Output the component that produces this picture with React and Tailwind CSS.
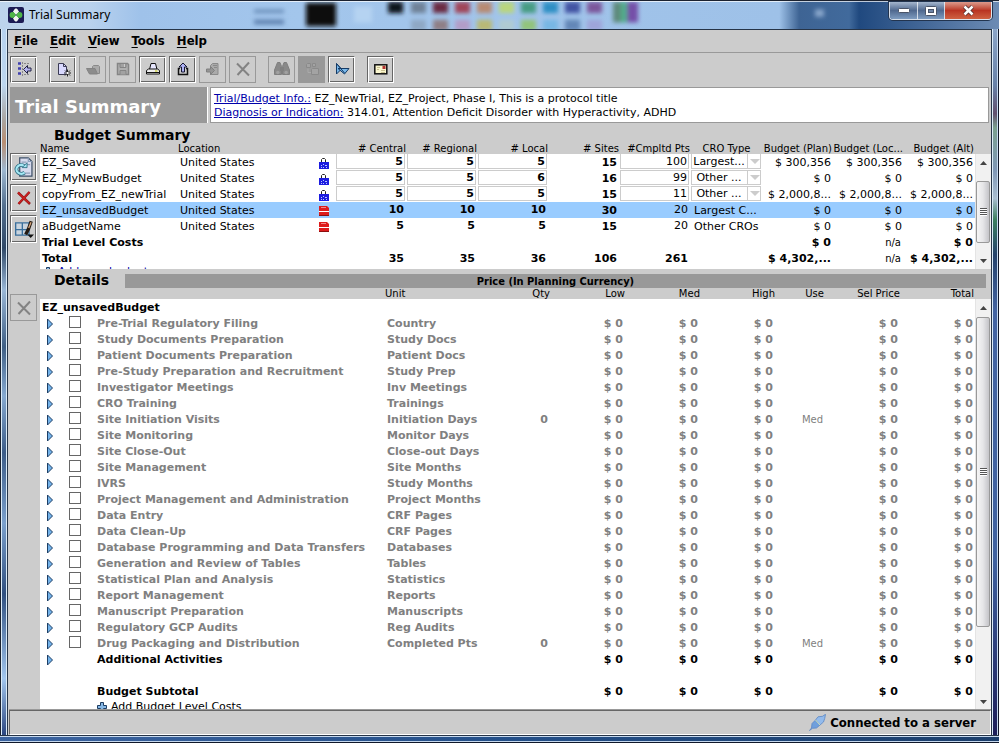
import React from "react";

const budgets = [
  { name: "EZ_Saved", lock: true, central: 5, regional: 5, local: 5, sites: 15, pts: 100, cro: "Largest...", costs: ["$ 300,356", "$ 300,356", "$ 300,356"] },
  { name: "EZ_MyNewBudget", lock: true, central: 5, regional: 5, local: 6, sites: 16, pts: 99, cro: "Other ...", costs: ["$ 0", "$ 0", "$ 0"] },
  { name: "copyFrom_EZ_newTrial", lock: true, central: 5, regional: 5, local: 5, sites: 15, pts: 11, cro: "Other ...", costs: ["$ 2,000,8...", "$ 2,000,8...", "$ 2,000,8..."] },
  { name: "EZ_unsavedBudget", selected: true, central: 10, regional: 10, local: 10, sites: 30, pts: 20, cro: "Largest C...", costs: ["$ 0", "$ 0", "$ 0"] },
  { name: "aBudgetName", central: 5, regional: 5, local: 5, sites: 15, pts: 20, cro: "Other CROs", costs: ["$ 0", "$ 0", "$ 0"] },
];

const activities = [
  ["Pre-Trial Regulatory Filing", "Country"],
  ["Study Documents Preparation", "Study Docs"],
  ["Patient Documents Preparation", "Patient Docs"],
  ["Pre-Study Preparation and Recruitment", "Study Prep"],
  ["Investigator Meetings", "Inv Meetings"],
  ["CRO Training", "Trainings"],
  ["Site Initiation Visits", "Initiation Days", "0", "Med"],
  ["Site Monitoring", "Monitor Days"],
  ["Site Close-Out", "Close-out Days"],
  ["Site Management", "Site Months"],
  ["IVRS", "Study Months"],
  ["Project Management and Administration", "Project Months"],
  ["Data Entry", "CRF Pages"],
  ["Data Clean-Up", "CRF Pages"],
  ["Database Programming and Data Transfers", "Databases"],
  ["Generation and Review of Tables", "Tables"],
  ["Statistical Plan and Analysis", "Statistics"],
  ["Report Management", "Reports"],
  ["Manuscript Preparation", "Manuscripts"],
  ["Regulatory GCP Audits", "Reg Audits"],
  ["Drug Packaging and Distribution", "Completed Pts", "0", "Med"],
];

const swatches = [
  [54, 0, "#10151f"], [77, 0, "#6f8298"], [99, 0, "#6a2a42"], [121, 0, "#a04459"], [143, 0, "#b78a72"], [165, 0, "#b9d67d"],
  [187, 0, "#479c83"], [209, 0, "#2f8fc4"], [231, 0, "#4253a3"], [253, 0, "#7c579b"],
  [77, 19, "#8fa8c4"], [99, 19, "#8f7f86"], [121, 19, "#b29dc8"], [143, 19, "#b9b976"], [165, 19, "#b0cbd2"], [187, 19, "#92c47c"],
  [209, 19, "#78b7e4"], [231, 19, "#6487b8"], [253, 19, "#9fa5da"],
];

/* Blurred glass behind the window caption */
function GlassBackdrop() {
  return (
    <svg className="absolute inset-0 h-full w-full" viewBox="0 0 999 30" preserveAspectRatio="none" aria-hidden="true">
      <defs>
        <linearGradient id="glass" x1="0" x2="1" y1="0" y2="0">
          <stop offset="0" stopColor="#bdd4ec" />
          <stop offset="0.09" stopColor="#b9d2ee" />
          <stop offset="0.14" stopColor="#9fc2ea" />
          <stop offset="0.3" stopColor="#a3c6ec" />
          <stop offset="0.78" stopColor="#9ec1e8" />
          <stop offset="0.8" stopColor="#3e6494" />
          <stop offset="0.85" stopColor="#416a9c" />
          <stop offset="0.86" stopColor="#20497f" />
          <stop offset="1" stopColor="#6c8bb4" />
        </linearGradient>
        <filter id="soft" x="-30%" y="-60%" width="160%" height="220%"><feGaussianBlur stdDeviation="2" /></filter>
      </defs>
      <rect width="999" height="30" fill="url(#glass)" />
      <g filter="url(#soft)">
        <rect x="254" y="9" width="30" height="4" fill="#6b8fba" />
        <rect x="254" y="20" width="30" height="5" fill="#5d80ad" />
        <rect x="306" y="2" width="30" height="25" fill="#07090f" />
        <rect x="354" y="6" width="18" height="17" fill="#b5d3f1" />
        {swatches.map(([x, y, c]) => (
          <rect key={x + "-" + y} x={x + 334} y={y + 1} width="15" height="12" fill={c} />
        ))}
        <rect x="613" y="1" width="9" height="22" fill="#5f8a7c" />
        <rect x="621" y="1" width="7" height="22" fill="#4fae8c" />
        <rect x="627" y="1" width="11" height="22" fill="#7550a8" />
        <rect x="815" y="9" width="9" height="8" fill="#88a6cb" />
      </g>
    </svg>
  );
}

function AppLogo() {
  return (
    <svg width="16" height="16" viewBox="0 0 16 16" aria-hidden="true">
      <rect width="16" height="16" rx="2" fill="#1c1c55" />
      <path d="M8 1 11 4.500 8 8 5 4.500ZM8 8l3 3.500-3 3.500-3-3.500Z" fill="#f1f5f0" />
      <circle cx="4.500" cy="8" r="2.900" fill="#4fb548" />
      <circle cx="11.500" cy="8" r="2.900" fill="#4fb548" />
      <circle cx="8" cy="4.300" r="2.300" fill="#f1f5f0" />
      <circle cx="8" cy="11.700" r="2.300" fill="#f1f5f0" />
    </svg>
  );
}

function Svg({ children, size = 18 }) {
  return (
    <svg width={size} height={size} viewBox="0 0 18 18" fill="none" aria-hidden="true" className="shrink-0">
      {children}
    </svg>
  );
}

const icons = {
  tree: (
    <Svg>
      <path d="M3 3.500h3M3 8.500h3M3 13.500h3" stroke="#3f3fae" strokeWidth="2.500" />
      <path d="M7.500 2v14M9 3.500h5M9 14.500h5" stroke="#888" strokeDasharray="2 1" />
      <path d="M8.500 9.500l4-4v2.500h3.500v3h-3.500v2.500Z" fill="#b4b4ef" stroke="#222244" />
    </Svg>
  ),
  newDoc: (
    <Svg>
      <path d="M4.500 3.500h5l3 3v8h-8Z" fill="#d9d9ff" stroke="#3b3b55" />
      <path d="M9.500 3.500v3h3" stroke="#3b3b55" />
      <path d="M13.500 9.500v7M10 13h7M11 10.500l5 5M16 10.500l-5 5" stroke="#222" />
      <rect x="12.500" y="12" width="2" height="2" fill="#fff" />
    </Svg>
  ),
  open: (
    <Svg>
      <path d="M8.500 8V6.500l1-1h5l1 1v7h-2" fill="#aaa" stroke="#8a8a8a" />
      <path d="M2.500 8.500h8.500l2.500 5.500H5.500Z" fill="#8c8c8c" stroke="#838383" />
    </Svg>
  ),
  save: (
    <Svg>
      <path d="M3.500 3.500h10l1 1v10h-11Z" fill="#b0b0b0" stroke="#858585" strokeWidth="1.500" />
      <path d="M6 3.500h6v4H6ZM6 14.500v-4h6v4" fill="#a2a2a2" stroke="#858585" />
      <path d="M10.500 4v3" stroke="#ccc" />
    </Svg>
  ),
  print: (
    <Svg>
      <path d="M5.500 9.500 7 3.500h4.500l1.500 6" fill="#e8e8ff" stroke="#111" />
      <path d="M2.500 10.500l2-1.500h9l2 1.500v3.500h-13Z" fill="#eee" stroke="#111" />
      <path d="M3 12.500h12" stroke="#111" />
      <path d="M11 11h2.500" stroke="#c4c800" />
    </Svg>
  ),
  upload: (
    <Svg>
      <path d="M6 8.500H4.500v6h9v-6H12" stroke="#111" strokeWidth="1.500" />
      <path d="M7.500 12V7H5l4-4 4 4h-2.500v5Z" fill="#aeb2f5" stroke="#151530" />
    </Svg>
  ),
  importDoc: (
    <Svg>
      <path d="M6.500 7V5.500l2-2h5.500v11H6.500V13" fill="#aaa" stroke="#8a8a8a" />
      <path d="M9 5.500h4M10 7.500h3" stroke="#8a8a8a" />
      <path d="M2.500 9h4V6.500l4 4-4 4V12h-4Z" fill="#959595" stroke="#808080" />
    </Svg>
  ),
  cross: (
    <Svg>
      <path d="M3 3.500 15 15.500M15 2.500 3.500 15" stroke="#838383" strokeWidth="2" />
    </Svg>
  ),
  find: (
    <Svg>
      <path d="M4.500 2.500h2.500l1.500 4v8H1.500V10ZM13.500 2.500H11l-1.500 4v8h7V10Z" fill="#898989" stroke="#7f7f7f" />
      <path d="M7 7h4v4H7Z" fill="#808080" />
      <circle cx="4.800" cy="12.500" r="1.800" fill="#a0a0a0" />
      <circle cx="13.200" cy="12.500" r="1.800" fill="#a0a0a0" />
    </Svg>
  ),
  copy: (
    <Svg>
      <path d="M3.500 4.500l1-1h3v4h-4ZM9.500 3.500h3v3h-3ZM8.500 9.500l1-1h6v6h-7Z" fill="#a3a3a3" stroke="#8a8a8a" />
      <path d="M5 8.500v4h3" stroke="#aaa" />
    </Svg>
  ),
  cursor: (
    <Svg>
      <path d="M3.500 3.500v10.500l5-5Z" fill="#79b8ea" stroke="#153b66" />
      <path d="M5 8.500h11L11.500 14Z" fill="#79b8ea" stroke="#153b66" />
      <path d="M3.500 3.500 11.500 13" stroke="#153b66" />
    </Svg>
  ),
  mail: (
    <Svg>
      <rect x="2.800" y="4.800" width="12" height="9" fill="#fbf7cf" stroke="#111" strokeWidth="1.500" />
      <rect x="10.500" y="6" width="3" height="3" fill="#b33131" />
      <path d="M5 7.500h3M5 9.500h2M9 10.500h4M9 12.500h4" stroke="#c9c090" />
    </Svg>
  ),
  refreshDoc: (
    <Svg size={22}>
      <path d="M5.500 1.500h7l3 3v12h-10Z" fill="#d8dcef" stroke="#3e5068" />
      <path d="M12.500 1.500v3h3M7 5h4M8 7h6M8 14h6" stroke="#8ea0ba" />
      <path d="M9.500 13.500a4 3.500 0 1 1-.5-5.500" stroke="#2a6b80" strokeWidth="3" />
      <path d="M9.500 13.500a4 3.500 0 1 1-.5-5.500" stroke="#a5e8f4" strokeWidth="1.700" />
      <path d="M7.500 9.500h4V5.500Z" fill="#a5e8f4" stroke="#2a6b80" strokeWidth=".7" />
    </Svg>
  ),
  remove: (
    <Svg>
      <path d="M3 3.500 15 15M14.500 3 3.500 15" stroke="#8b1515" strokeWidth="2.500" />
      <path d="M3 3.500 14.500 14.500M14.500 3 3.500 14.500" stroke="#cc2020" strokeWidth="1.500" />
    </Svg>
  ),
  gridEdit: (
    <Svg size={20}>
      <path d="M1.500 3.500h12v11h-12ZM1.500 9.500h12M7.500 3.500v11" fill="#c9d4de" stroke="#3a6f9c" strokeWidth="1.200" />
      <path d="M15.500 2 13 9l-2.500 5" stroke="#241a12" strokeWidth="3" />
      <path d="M15.300 3 13.200 8" stroke="#d6a57b" strokeWidth="1.200" />
      <path d="M12 14h6l-3 3Z" fill="#111" />
    </Svg>
  ),
};

function ToolButton({ icon, label, disabled, pressed, side }) {
  const tone = pressed
    ? "border-[#999] bg-[#999]"
    : disabled
      ? "border-[#999]"
      : "border-[#666] border-r-white border-b-white shadow-[inset_1px_1px_0_#fff,inset_-1px_-1px_0_#666]";
  return (
    <button type="button" disabled={disabled} aria-label={label} title={label}
      className={`flex w-[27px] shrink-0 items-center justify-center border ${side ? "h-[28px]" : "h-[27px]"} ${tone}`}>
      {icons[icon]}
    </button>
  );
}

function LockIcon() {
  return (
    <svg width="12" height="12" viewBox="0 0 12 12" className="block" aria-label="Locked" role="img">
      <path d="M3.500 6V2.500l1-1h2l1 1V6" fill="none" stroke="#222" />
      <rect x="1" y="5" width="10" height="7" fill="#1c1ce0" />
      <path d="M3 8.500h1M5 7.500h1M5 10.500h1M7 8.500h2M3 10.500h1M8 10.500h1" stroke="#b9c4ff" />
    </svg>
  );
}

function UnsavedIcon() {
  return (
    <svg width="12" height="12" viewBox="0 0 12 12" className="block" aria-label="Unsaved" role="img">
      <path d="M1 1h8l2 2v8H1Z" fill="#dd1c1c" />
      <path d="M3 2.500h5" stroke="#f08a8a" />
      <path d="M1 7l1-1 1 1 1-1 1 1 1-1 1 1 1-1 1 1 1-1 1 1" stroke="#fff" fill="none" />
      <path d="M1 10.500h10" stroke="#8d0f0f" />
    </svg>
  );
}

function Expander({ label }) {
  return (
    <button type="button" aria-label={`Expand ${label}`} className="ml-[6px] block">
      <svg width="8" height="12" viewBox="0 0 8 12" className="block" aria-hidden="true">
        <path d="M1.500 1v10L6.500 6Z" fill="#72b2ea" stroke="#1d3f66" />
      </svg>
    </button>
  );
}

function PlusIcon() {
  return (
    <svg width="12" height="12" viewBox="0 0 12 12" className="block shrink-0" aria-hidden="true">
      <path d="M4.500 1.500h3v3h3v3h-3v3h-3v-3h-3v-3h3Z" fill="#86b8e6" stroke="#1f3e63" />
    </svg>
  );
}

function ScrollBar({ before, thumb, after }) {
  return (
    <div className="flex w-4 shrink-0 flex-col items-stretch border-l border-[#e4e4e4] bg-[#f1f1f1]">
      <button type="button" aria-label="Scroll up" className="flex h-[17px] shrink-0 items-center justify-center">
        <svg width="7" height="4" viewBox="0 0 7 4" aria-hidden="true"><path d="M0 4 3.500 0 7 4Z" fill="#444" /></svg>
      </button>
      <div className={before} />
      <div className={`${thumb} mr-px flex flex-col items-center justify-center rounded-[2px] border border-[#999] bg-linear-to-r from-[#f5f5f5] via-[#e6e6e8] to-[#c4c4c8]`}>
        <i className="h-[2px] w-[7px] border-b border-white bg-[#555]" />
        <i className="h-[2px] w-[7px] border-b border-white bg-[#555]" />
        <i className="h-[2px] w-[7px] border-b border-white bg-[#555]" />
        <i className="h-[2px] w-[7px] border-b border-white bg-[#555]" />
      </div>
      <div className={after} />
      <button type="button" aria-label="Scroll down" className="flex h-[17px] shrink-0 items-center justify-center">
        <svg width="7" height="4" viewBox="0 0 7 4" aria-hidden="true"><path d="M0 0h7L3.500 4Z" fill="#444" /></svg>
      </button>
    </div>
  );
}

function NumberField({ value, label, bold, first }) {
  return (
    <input type="text" defaultValue={value} aria-label={label}
      className={`block h-[15px] w-[calc(100%-2px)] border border-[#ccc] bg-white px-px text-right text-[11px] leading-[13px] ${bold ? "font-bold" : ""} ${first ? "border-t-0" : ""}`} />
  );
}

function BudgetRow({ b, first }) {
  const num = (key, head, bold) => (
    <td className={`p-0 text-right align-top ${bold ? "font-bold" : ""}`}>
      {b.lock ? <NumberField value={b[key]} label={`${head}, ${b.name}`} bold={bold} first={first} /> : <span className="block pt-px pr-[3px]">{b[key]}</span>}
    </td>
  );
  return (
    <tr className={`h-4 ${b.selected ? "bg-[#99ccff]" : ""}`}>
      <td className="p-0 pl-[2px] pt-[2px]">{b.name}</td>
      <td className="p-0 pl-[2px] pt-[2px]">United States</td>
      <td className="p-0 pl-2 pt-[2px]">{b.lock ? <LockIcon /> : <UnsavedIcon />}</td>
      {num("central", "Central", true)}
      {num("regional", "Regional", true)}
      {num("local", "Local", true)}
      <td className="p-0 pr-[3px] pt-[2px] text-right font-bold">{b.sites}</td>
      {num("pts", "Completed patients", false)}
      <td className="p-0 align-top">
        {b.lock ? (
          <div className="relative">
            <select aria-label={`CRO type, ${b.name}`}
              className={`block h-[15px] w-[calc(100%-1px)] appearance-none border border-[#ccc] bg-white pr-3.5 text-center text-[11px] leading-[13px] ${first ? "border-t-0" : ""}`}>
              <option>{b.cro}</option>
            </select>
            <span className="pointer-events-none absolute inset-y-0 right-px flex w-[14px] items-center justify-center border-l border-[#ccc]">
              <svg width="10" height="5" viewBox="0 0 10 5" aria-hidden="true"><path d="M0 0h10L5 5Z" fill="#ccc" /></svg>
            </span>
          </div>
        ) : <span className="block pl-[3px] pt-[2px]">{b.cro}</span>}
      </td>
      {b.costs.map((c, i) => <td key={i} className="p-0 pr-[2px] pt-[2px] text-right">{c}</td>)}
    </tr>
  );
}

function BudgetTable() {
  return (
    <table className="w-full table-fixed border-collapse whitespace-nowrap bg-white text-[11px] leading-[14px]">
      <colgroup>
        <col /><col className="w-[132px]" /><col className="w-[26px]" />
        {Array.from({ length: 9 }, (_, i) => <col key={i} className="w-[71px]" />)}
      </colgroup>
      <thead className="bg-[#ccc] text-[10px] leading-[11px]">
        <tr className="h-[11px]">
          <th className="p-0 text-left font-normal">Name</th>
          <th className="p-0 text-left font-normal">Location</th>
          <th className="p-0"></th>
          {["# Central", "# Regional", "# Local", "# Sites", "#Cmpltd Pts"].map((h) => (
            <th key={h} className="p-0 pr-px text-right font-normal">{h}</th>
          ))}
          <th className="p-0 text-center font-normal">CRO Type</th>
          {["Budget (Plan)", "Budget (Loc...", "Budget (Alt)"].map((h) => (
            <th key={h} className="p-0 pr-px text-right font-normal">{h}</th>
          ))}
        </tr>
      </thead>
      <tbody>
        {budgets.map((b, i) => <BudgetRow key={b.name} b={b} first={i === 0} />)}
        <tr className="h-4 font-bold">
          <td className="p-0 pl-[2px] pt-[2px]">Trial Level Costs</td>
          <td colSpan="8" className="p-0"></td>
          <td className="p-0 pr-[2px] pt-[2px] text-right">$ 0</td>
          <td className="p-0 pr-[3px] pt-[2px] text-right text-[10px] font-normal">n/a</td>
          <td className="p-0 pr-[2px] pt-[2px] text-right">$ 0</td>
        </tr>
        <tr className="h-4 font-bold">
          <td className="p-0 pl-[2px] pt-[2px]">Total</td>
          <td colSpan="2" className="p-0"></td>
          {["35", "35", "36", "106", "261"].map((v, i) => <td key={i} className="p-0 pr-[3px] pt-[2px] text-right">{v}</td>)}
          <td className="p-0"></td>
          <td className="p-0 pr-[2px] pt-[2px] text-right">$ 4,302,...</td>
          <td className="p-0 pr-[3px] pt-[2px] text-right text-[10px] font-normal">n/a</td>
          <td className="p-0 pr-[2px] pt-[2px] text-right">$ 4,302,...</td>
        </tr>
        <tr className="h-4">
          <td colSpan="12" className="p-0 pl-[2px] align-top">
            <button type="button" className="flex items-start gap-1 leading-[11px] text-[#0000aa]"><PlusIcon />Add new budget</button>
          </td>
        </tr>
      </tbody>
    </table>
  );
}

function Money() {
  return <td className="p-0 pr-[2px] pt-[2px] text-right">$ 0</td>;
}

function DetailsTable() {
  return (
    <table className="w-full table-fixed border-collapse whitespace-nowrap bg-white text-[11px] leading-[14px]">
      <colgroup>
        <col className="w-[20px]" /><col className="w-[35px]" /><col />
        <col className="w-[95px]" /><col className="w-[70px]" /><col className="w-[75px]" /><col className="w-[75px]" />
        <col className="w-[75px]" /><col className="w-[75px]" /><col className="w-[50px]" /><col className="w-[75px]" />
      </colgroup>
      <thead className="bg-[#ccc] text-[10px] leading-[11px]">
        <tr className="h-[11px]">
          <th colSpan="3" className="p-0"></th>
          <th className="p-0 text-left font-normal">Unit</th>
          <th className="p-0 text-right font-normal">Qty</th>
          <th className="p-0 text-right font-normal">Low</th>
          <th className="p-0 text-right font-normal">Med</th>
          <th className="p-0 text-right font-normal">High</th>
          <th className="p-0 pl-1 text-center font-normal">Use</th>
          <th className="p-0 text-right font-normal">Sel Price</th>
          <th className="p-0 pr-px text-right font-normal">Total</th>
        </tr>
      </thead>
      <tbody className="font-bold">
        <tr className="h-4"><td colSpan="11" className="p-0 pl-[2px] pt-[2px]">EZ_unsavedBudget</td></tr>
        {activities.map(([name, unit, qty, use]) => (
          <tr key={name} className="h-4 text-[#808080]">
            <td className="p-0 pt-px"><Expander label={name} /></td>
            <td className="p-0 align-top">
              <input type="checkbox" aria-label={name} className="ml-[9px] mt-px block size-3 appearance-none border border-[#666] bg-white checked:bg-[#666]" />
            </td>
            <td className="p-0 pl-[2px] pt-[2px]">{name}</td>
            <td className="p-0 pl-[2px] pt-[2px]">{unit}</td>
            <td className="p-0 pr-[2px] pt-[2px] text-right">{qty}</td>
            <Money /><Money /><Money />
            <td className="p-0 pt-[2px] text-center text-[10px] font-normal">{use}</td>
            <Money /><Money />
          </tr>
        ))}
        <tr className="h-4">
          <td className="p-0 pt-px"><Expander label="Additional Activities" /></td>
          <td className="p-0"></td>
          <td className="p-0 pl-[2px] pt-[2px]">Additional Activities</td>
          <td colSpan="2" className="p-0"></td>
          <Money /><Money /><Money />
          <td className="p-0"></td>
          <Money /><Money />
        </tr>
        <tr className="h-4"><td colSpan="11" className="p-0"></td></tr>
        <tr className="h-4">
          <td colSpan="2" className="p-0"></td>
          <td className="p-0 pl-[2px] pt-[2px]">Budget Subtotal</td>
          <td colSpan="2" className="p-0"></td>
          <Money /><Money /><Money />
          <td className="p-0"></td>
          <Money /><Money />
        </tr>
        <tr className="h-4 font-normal">
          <td colSpan="2" className="p-0"></td>
          <td colSpan="9" className="p-0 pl-px">
            <button type="button" className="flex h-4 items-center gap-[3px]"><PlusIcon />Add Budget Level Costs</button>
          </td>
        </tr>
      </tbody>
    </table>
  );
}

function Caption() {
  const base = "flex items-center justify-center border-r border-white/70";
  return (
    <header className="relative h-[29px] shrink-0 overflow-hidden border-t border-[#1b2230]">
      <GlassBackdrop />
      <div className="relative flex h-full items-start justify-between border-t border-white/70">
        <div className="flex items-center gap-[5px] pt-[5px] pl-2">
          <AppLogo />
          <h1 className="font-['Noto_Sans','Open_Sans',sans-serif] text-[12px] leading-4 text-black">Trial Summary</h1>
        </div>
        <div className="mr-[7px] flex h-[18px] w-[103px] overflow-hidden rounded-b-[4px] border border-t-0 border-white/80 shadow-[0_0_0_1px_#22344f]">
          <button type="button" aria-label="Minimize" className={`${base} w-[28px] bg-linear-to-b from-[#a5b6cd] via-[#50698f] to-[#7e9cc0]`}>
            <svg width="12" height="5" viewBox="0 0 12 5" aria-hidden="true"><rect x=".5" y=".5" width="11" height="4" rx="1" fill="#fff" stroke="#4a5468" /></svg>
          </button>
          <button type="button" aria-label="Maximize" className={`${base} w-[27px] bg-linear-to-b from-[#a5b6cd] via-[#50698f] to-[#7e9cc0]`}>
            <svg width="12" height="10" viewBox="0 0 12 10" aria-hidden="true">
              <rect x=".5" y=".5" width="11" height="9" rx="1" fill="#fff" stroke="#4a5468" />
              <rect x="3.500" y="3.500" width="5" height="3" fill="#6d84a6" stroke="#4a5468" />
            </svg>
          </button>
          <button type="button" aria-label="Close" className="flex flex-1 items-center justify-center bg-linear-to-b from-[#dc9a8c] via-[#b93423] to-[#cf6142]">
            <svg width="13" height="11" viewBox="0 0 13 11" aria-hidden="true">
              <path d="M2.500 1.500 10.500 9.500M10.500 1.500 2.500 9.500" stroke="#4c2b2b" strokeWidth="4" />
              <path d="M2.500 1.500 10.500 9.500M10.500 1.500 2.500 9.500" stroke="#fff" strokeWidth="2.500" />
            </svg>
          </button>
        </div>
      </div>
    </header>
  );
}

export default function App() {
  return (
    <div className="flex h-screen flex-col overflow-hidden bg-[#1b2230] font-['DejaVu_Sans',Verdana,sans-serif] text-black">
      <Caption />
      <div className="flex min-h-0 flex-1">
        <div className="w-[7px] shrink-0 border-x border-l-[#1b2230] border-r-[#dcecf8] bg-[linear-gradient(180deg,#b7d2ee_0%,#bdd6ee_8%,#a9a49f_13%,#b98e72_16%,#9db7d0_20%,#54708f_25%,#2f4867_31%,#9ab7d6_37%,#3f5f85_45%,#86a9d0_52%,#3c5c88_60%,#7ba0cc_70%,#2f4f80_80%,#a2c6ee_92%,#2a4680_100%)] shadow-[inset_1px_0_0_#dcecf8]" />
        <div className="flex min-w-0 flex-1 flex-col border border-b-0 border-[#263447] bg-[#ccc]">
          <nav className="flex h-[23px] shrink-0 items-center gap-3 border-b border-[#999] pl-1.5 font-['DejaVu_Sans_Condensed','DejaVu_Sans',sans-serif] text-[13px] font-bold">
            {["File", "Edit", "View", "Tools", "Help"].map((m) => (
              <button key={m} type="button"><span className="underline underline-offset-2">{m[0]}</span>{m.slice(1)}</button>
            ))}
          </nav>

          <div role="toolbar" aria-label="Main" className="flex h-[34px] shrink-0 items-center gap-3 pb-1 pl-[2px] pt-[2px]">
            <ToolButton icon="tree" label="Show navigator" />
            <div className="flex gap-[3px]">
              <ToolButton icon="newDoc" label="New" />
              <ToolButton icon="open" label="Open" disabled />
              <ToolButton icon="save" label="Save" disabled />
              <ToolButton icon="print" label="Print" />
              <ToolButton icon="upload" label="Export" />
              <ToolButton icon="importDoc" label="Import" disabled />
              <ToolButton icon="cross" label="Delete" disabled />
            </div>
            <div className="flex gap-[3px]">
              <ToolButton icon="find" label="Find" disabled />
              <ToolButton icon="copy" label="Copy" disabled pressed />
              <ToolButton icon="cursor" label="Navigate" />
            </div>
            <ToolButton icon="mail" label="Mail" />
          </div>

          <section className="mx-[2px] flex h-9 shrink-0 gap-[2px]">
            <h2 className="w-[198px] shrink-0 border-r border-white bg-[#999] pl-[5px] pt-[2px] text-[18px] font-bold leading-9 text-white">Trial Summary</h2>
            <div className="flex-1 border border-[#999] bg-white pl-[3px] pt-1 text-[11px] leading-[14px]">
              <p><a href="#info" className="text-[#0000aa] underline">Trial/Budget Info.:</a> EZ_NewTrial, EZ_Project, Phase I, This is a protocol title</p>
              <p><a href="#diagnosis" className="text-[#0000aa] underline">Diagnosis or Indication:</a> 314.01, Attention Deficit Disorder with Hyperactivity, ADHD</p>
            </div>
          </section>

          <section className="flex h-[146px] shrink-0">
            <div className="flex w-8 shrink-0 flex-col gap-[3px] pl-[2px] pt-[30px]">
              <ToolButton icon="refreshDoc" label="Recalculate budget" side />
              <ToolButton icon="remove" label="Remove budget" side />
              <ToolButton icon="gridEdit" label="Edit columns" side />
            </div>
            <div className="flex min-w-0 flex-1 flex-col">
              <h2 className="h-5 pl-3.5 text-[14px] font-bold leading-6">Budget Summary</h2>
              <div className="flex min-h-0 flex-1">
                <div className="min-w-0 flex-1 overflow-hidden"><BudgetTable /></div>
                <div className="flex pt-[11px]">
                  <ScrollBar before="flex-[10]" thumb="flex-[62]" after="flex-[9]" />
                </div>
              </div>
            </div>
          </section>

          <section className="flex min-h-0 flex-1">
            <div className="w-8 shrink-0 pl-[2px] pt-[25px]">
              <ToolButton icon="cross" label="Remove activity" disabled />
            </div>
            <div className="flex min-w-0 flex-1 flex-col">
              <div className="flex h-[19px] shrink-0">
                <h2 className="w-[85px] pl-3.5 text-[14px] font-bold leading-[22px]">Details</h2>
                <h3 className="mr-[5px] mt-[5px] h-[14px] flex-1 bg-[#999] text-center font-['DejaVu_Sans_Condensed','DejaVu_Sans',sans-serif] text-[11px] font-bold leading-[15px]">Price (In Planning Currency)</h3>
              </div>
              <div className="flex min-h-0 flex-1">
                <div className="min-w-0 flex-1 overflow-hidden bg-white"><DetailsTable /></div>
                <div className="flex pt-[11px]">
                  <ScrollBar before="flex-[1]" thumb="flex-[310]" after="flex-[66]" />
                </div>
              </div>
            </div>
          </section>

          <footer className="ml-px flex h-[25px] shrink-0 items-center justify-end gap-1 border border-[#666] border-b-white border-r-white pr-[14px] shadow-[0_-1px_0_#999]">
            <svg width="17" height="17" viewBox="0 0 17 17" aria-hidden="true">
              <path d="M.5 16.500 2.500 14 3 9.500 6.500 6l4.500 5-3.500 3-4 .3Z" fill="#6f9fdc" stroke="#5a86c4" strokeWidth=".8" />
              <path d="M6.500 6l2.500-3.200 4.500-.5 3-2-.8 4.200L14.500 8 11 11Z" fill="#93bbec" stroke="#5a86c4" strokeWidth=".8" />
              <path d="M6.500 6l4.500 5" stroke="#cfe2b8" />
            </svg>
            <span className="font-['DejaVu_Sans_Condensed','DejaVu_Sans',sans-serif] text-[13px] font-bold leading-4">Connected to a server</span>
          </footer>
        </div>
        <div className="w-[7px] shrink-0 border-x border-l-[#dcecf8] border-r-[#10182a] bg-[linear-gradient(180deg,#8ba5c8_0%,#6781a8_8%,#62506e_12%,#7aa08f_14%,#7f97b6_20%,#a9bdd0_24%,#3d8060_27%,#24426c_32%,#4364a2_40%,#3f62a0_75%,#1d1f5a_100%)] shadow-[inset_-1px_0_0_#c5d8ee]" />
      </div>
      <div className="flex h-2 shrink-0 flex-col border-t border-b border-b-[#10182a] border-t-[#263447] bg-[#1b2230]">
        <div className="flex-1 border-y border-[#c5d8ee] bg-linear-to-r from-[#3c64a0] via-[#24508a] to-[#1c3f6c]" />
      </div>
    </div>
  );
}
